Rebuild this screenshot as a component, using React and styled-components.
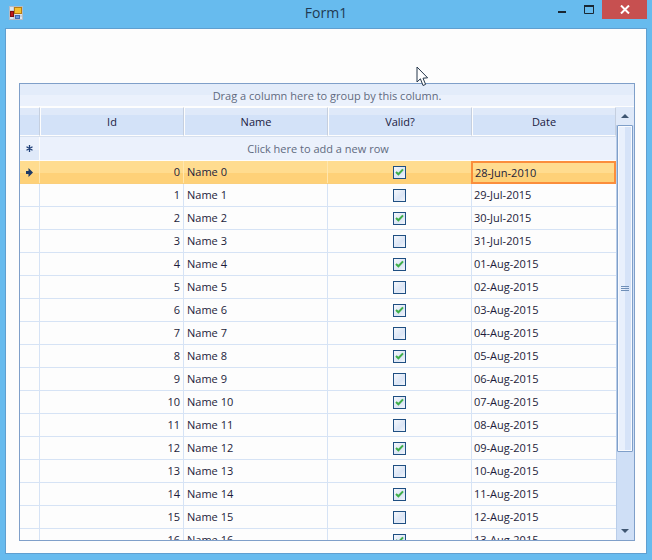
import React from "react";
import styled, { createGlobalStyle } from "styled-components";

const GlobalStyle = createGlobalStyle`
  html, body {
    margin: 0;
    padding: 0;
    background: #67bbee;
  }
  body {
    font-family: "Open Sans", "Noto Sans", "Liberation Sans", sans-serif;
    font-size: 11px;
    color: #1c1c3a;
  }
`;

const COLUMNS = "20px 144px 144px 144px 144px";

const Window = styled.div`
  width: 652px;
  height: 560px;
  background: #67bbee;
  display: flex;
  flex-direction: column;
  overflow: hidden;
`;

const TitleBar = styled.div`
  height: 28px;
  flex: none;
  display: flex;
  align-items: flex-start;
  position: relative;
  padding-left: 9px;
`;

const AppIcon = styled.svg`
  width: 14px;
  height: 14px;
  margin-top: 6px;
`;

const Title = styled.div`
  position: absolute;
  left: 0;
  right: 0;
  top: 3px;
  text-align: center;
  font-size: 14px;
  line-height: 20px;
  color: #1f3a52;
`;

const Controls = styled.div`
  margin-left: auto;
  margin-right: 5px;
  display: flex;
  align-items: flex-start;
  position: relative;
`;

const ControlButton = styled.div`
  width: ${(props) => (props.wide ? "45px" : "27px")};
  height: 19px;
  display: flex;
  align-items: center;
  justify-content: center;
  background: ${(props) => (props.wide ? "#c75050" : "transparent")};
`;

const MinimizeGlyph = styled.svg`
  width: 8px;
  height: 2px;
  margin-top: 5px;
`;

const Client = styled.div`
  flex: 1;
  margin: 0 5px 6px 5px;
  background: #fdfdfd;
  border: 1px solid #5f9fd0;
  padding: 54px 11px 12px 13px;
  position: relative;
  min-height: 0;
  display: flex;
`;

const Cursor = styled.svg`
  position: absolute;
  left: 410px;
  top: 37px;
  width: 13px;
  height: 21px;
  z-index: 2;
`;

const Grid = styled.div`
  flex: 1;
  border: 1px solid #7f9fc9;
  display: flex;
  flex-direction: column;
  overflow: hidden;
  min-height: 0;
`;

const GroupPanel = styled.div`
  height: 22px;
  flex: none;
  border-bottom: 1px solid #fdfdfd;
  background: linear-gradient(#e3ecfa 0, #e3ecfa 50%, #ebf1fc 50%);
  text-align: center;
  line-height: 24px;
  color: #5f6a80;
`;

const Main = styled.div`
  flex: 1;
  display: flex;
  min-height: 0;
`;

const Table = styled.div`
  width: 596px;
  flex: none;
  overflow: hidden;
`;

const HeaderRow = styled.div`
  display: grid;
  grid-template-columns: ${COLUMNS};
  height: 29px;
  border-bottom: 1px solid #d6e0ef;
`;

const HeaderCell = styled.div`
  border: 1px solid #fdfdfd;
  border-left-width: ${(props) => (props.first ? "0" : "1px")};
  border-right-color: #c5cfdf;
  background: linear-gradient(#dfe9f9 0, #dfe9f9 25%, #d3e2f8 25%);
  display: flex;
  align-items: center;
  justify-content: center;
  color: #20203f;
`;

const NewRow = styled.div`
  position: relative;
  height: 23px;
  border-bottom: 1px solid #fdfdfd;
  background: #ebf1fc;
  text-align: center;
  line-height: 23px;
  color: #5f6a80;
`;

const NewRowMark = styled.div`
  position: absolute;
  left: 0;
  top: 0;
  bottom: 0;
  width: 19px;
  display: flex;
  align-items: center;
  justify-content: center;
  background: linear-gradient(#ebf1fc 0, #ebf1fc 55%, #dfe9f9 55%);
  border-right: 1px solid #fdfdfd;
`;

const Row = styled.div`
  display: grid;
  grid-template-columns: ${COLUMNS};
  height: 23px;
  box-sizing: border-box;
  background: ${(props) =>
    props.selected
      ? "linear-gradient(#ffdc8f 0, #ffdc8f 55%, #fed178 55%)"
      : "#fdfdfd"};
  border-bottom: 1px solid ${(props) => (props.selected ? "#fbcf7c" : "#d6e3f5")};
`;

const Cell = styled.div`
  box-sizing: border-box;
  border-right: 1px solid ${(props) => (props.selected ? "#ffe6ad" : "#d6e3f5")};
  display: flex;
  align-items: center;
  padding: 0 3px ${(props) => (props.align === "center" ? "0" : "1px")};
  justify-content: ${(props) =>
    props.align === "right"
      ? "flex-end"
      : props.align === "center"
      ? "center"
      : "flex-start"};
  white-space: nowrap;
`;

const DateCell = styled(Cell)`
  border: ${(props) => (props.selected ? "2px solid #fb8e3c" : "0")};
  padding: 0 2px 1px;
  margin-left: ${(props) => (props.selected ? "-1px" : "0")};
  margin-bottom: ${(props) => (props.selected ? "-1px" : "0")};
`;

const Indicator = styled.div`
  box-sizing: border-box;
  border-right: 1px solid ${(props) => (props.selected ? "#ffe6ad" : "#d6e3f5")};
  display: flex;
  align-items: center;
  justify-content: center;
`;

const CheckBox = styled.div`
  box-sizing: border-box;
  width: 13px;
  height: 13px;
  border: 1px solid #1f4f82;
  background: linear-gradient(135deg, #f6f8fc 0, #dbe5f5 60%, #f3f6fb 100%);
  display: flex;
  align-items: center;
  justify-content: center;
`;

const ScrollBar = styled.div`
  flex: 1;
  background: #cfdff6;
  display: flex;
  flex-direction: column;
  align-items: center;
  box-shadow: inset 1px 0 0 #b9cde9;
`;

const ScrollButton = styled.div`
  height: 18px;
  width: 100%;
  flex: none;
  box-sizing: border-box;
  padding-right: 1px;
  display: flex;
  align-items: center;
  justify-content: center;
  background: ${(props) => (props.top ? "#dfe9f9" : "transparent")};
`;

const Arrow = styled.div`
  width: 0;
  height: 0;
  border-left: 4px solid transparent;
  border-right: 4px solid transparent;
  ${(props) =>
    props.up
      ? "border-bottom: 4px solid #3f5672;"
      : "border-top: 4px solid #3f5672;"}
`;

const ScrollThumb = styled.div`
  box-sizing: border-box;
  width: 16px;
  height: 327px;
  flex: none;
  border: 1px solid #7f9fc9;
  border-radius: 1px;
  background: linear-gradient(90deg, #e9f0fc 0, #e9f0fc 50%, #d6e3f8 50%);
  box-shadow: inset 0 0 0 1px #f8fafe;
  display: flex;
  flex-direction: column;
  align-items: center;
  justify-content: center;
  gap: 1px;
`;

const ThumbLine = styled.div`
  width: 8px;
  height: 1px;
  margin-right: 1px;
  background: #6f8fb8;
`;

const ScrollTrack = styled.div`
  flex: 1;
`;

const pad = (n) => String(n).padStart(2, "0");

function rowDate(i) {
  if (i === 0) return "28-Jun-2010";
  if (i === 1) return "29-Jul-2015";
  if (i === 2) return "30-Jul-2015";
  if (i === 3) return "31-Jul-2015";
  return `${pad(i - 3)}-Aug-2015`;
}

const rows = Array.from({ length: 17 }, (_, i) => i);

function Check() {
  return (
    <svg width="9" height="8" viewBox="0 0 9 8">
      <path d="M1 4 L3.4 6.3 L8 1.4" fill="none" stroke="#3fae49" strokeWidth="2" />
    </svg>
  );
}

export default function App() {
  return (
    <Window>
      <GlobalStyle />
      <TitleBar>
        <AppIcon viewBox="0 0 14 14">
          <rect x="0.5" y="0.5" width="13" height="13" fill="#dfe6ee" stroke="#b3bcc6" />
          <path d="M5 0v14M0 5h14M0 10h14" stroke="#b3bcc6" />
          <rect x="5.5" y="1.5" width="7" height="6" fill="#f6c02e" stroke="#b87c10" />
          <rect x="1.5" y="5.5" width="3" height="5" fill="#c01818" stroke="#7d1010" />
          <rect x="6.5" y="9.5" width="4" height="3" fill="#6a96dc" stroke="#3f6db0" />
        </AppIcon>
        <Title>Form1</Title>
        <Controls>
          <ControlButton>
            <MinimizeGlyph viewBox="0 0 8 2">
              <rect width="8" height="2" fill="#1a2733" />
            </MinimizeGlyph>
          </ControlButton>
          <ControlButton>
            <svg width="10" height="9" viewBox="0 0 10 9">
              <path d="M0.5 1.5h9v7h-9z" fill="none" stroke="#1a2733" />
              <rect width="10" height="2" fill="#1a2733" />
            </svg>
          </ControlButton>
          <ControlButton wide>
            <svg width="10" height="9" viewBox="0 0 10 9">
              <path d="M1 0.5 L9 8.5 M9 0.5 L1 8.5" stroke="#ffffff" strokeWidth="2" />
            </svg>
          </ControlButton>
        </Controls>
      </TitleBar>
      <Client>
        <Cursor viewBox="0 0 13 21">
          <path
            d="M1 1 V16 L4.4 12.8 L7 19.5 L9.6 18.4 L7 12.2 L11.6 11.8 Z"
            fill="#ffffff"
            stroke="#25364a"
            strokeWidth="1"
          />
        </Cursor>
        <Grid>
          <GroupPanel>Drag a column here to group by this column.</GroupPanel>
          <Main>
            <Table>
              <HeaderRow>
                <HeaderCell first />
                <HeaderCell>Id</HeaderCell>
                <HeaderCell>Name</HeaderCell>
                <HeaderCell>Valid?</HeaderCell>
                <HeaderCell>Date</HeaderCell>
              </HeaderRow>
              <NewRow>
                <NewRowMark>
                  <svg width="9" height="9" viewBox="0 0 9 9">
                    <path
                      d="M4.5 1v7M1.5 2.7l6 3.6M7.5 2.7l-6 3.6"
                      fill="none"
                      stroke="#1f3f78"
                      strokeWidth="1.3"
                    />
                  </svg>
                </NewRowMark>
                Click here to add a new row
              </NewRow>
              {rows.map((i) => {
                const selected = i === 0;
                return (
                  <Row key={i} selected={selected}>
                    <Indicator selected={selected}>
                      {selected && (
                        <svg width="7" height="9" viewBox="0 0 7 9">
                          <path d="M0 3h2.5V0L7 4.5 2.5 9V6H0z" fill="#1f3a66" />
                        </svg>
                      )}
                    </Indicator>
                    <Cell selected={selected} align="right">{i}</Cell>
                    <Cell selected={selected}>Name {i}</Cell>
                    <Cell selected={selected} align="center">
                      <CheckBox>{i % 2 === 0 && <Check />}</CheckBox>
                    </Cell>
                    <DateCell selected={selected}>{rowDate(i)}</DateCell>
                  </Row>
                );
              })}
            </Table>
            <ScrollBar>
              <ScrollButton top>
                <Arrow up />
              </ScrollButton>
              <ScrollThumb>
                <ThumbLine />
                <ThumbLine />
                <ThumbLine />
              </ScrollThumb>
              <ScrollTrack />
              <ScrollButton>
                <Arrow />
              </ScrollButton>
            </ScrollBar>
          </Main>
        </Grid>
      </Client>
    </Window>
  );
}
